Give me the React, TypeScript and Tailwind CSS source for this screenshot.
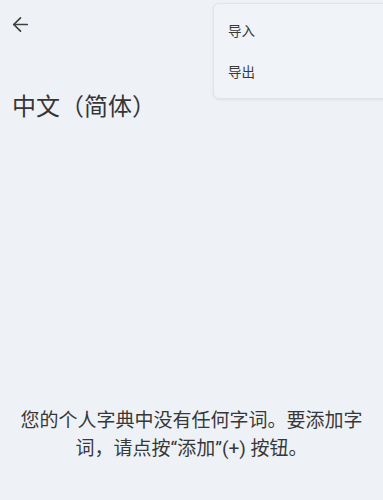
import { ArrowLeft } from "lucide-react"

const font = { fontFamily: '"Noto Sans CJK SC", "Noto Sans", sans-serif' }
const mixed = { fontFamily: 'Roboto, "Noto Sans CJK SC", sans-serif' }

export default function App() {
  return (
    <div
      className="relative flex h-[500px] w-[383px] flex-col overflow-hidden bg-[#eef2f7] text-[#363636]"
      style={font}
    >
      <div className="flex h-[48px] items-center pl-[9px]">
        <ArrowLeft size={23} strokeWidth={1.8} className="text-[#404040]" />
      </div>
      <h1 className="mt-[41px] pl-[12px] text-[24px] leading-[32px] font-normal">中文（简体）</h1>
      <div className="flex-1" />
      <p
        className="px-[12px] pb-[37px] text-center text-[19px] leading-[28px] text-[#383838]"
        style={mixed}
      >
        您的个人字典中没有任何字词。要添加字词，请点按“添加”(+) 按钮。
      </p>

      <div className="absolute top-[3px] left-[213px] w-[175px] rounded-md border border-[#e1e4e9] bg-[#f0f3f8] py-[6px] shadow-[0_1px_3px_rgba(0,0,0,0.07)]">
        <div className="flex h-[41px] items-center pl-[14px] text-[13.5px] text-[#3a3a3a]">导入</div>
        <div className="flex h-[41px] items-center pl-[14px] text-[13.5px] text-[#3a3a3a]">导出</div>
      </div>
    </div>
  )
}
